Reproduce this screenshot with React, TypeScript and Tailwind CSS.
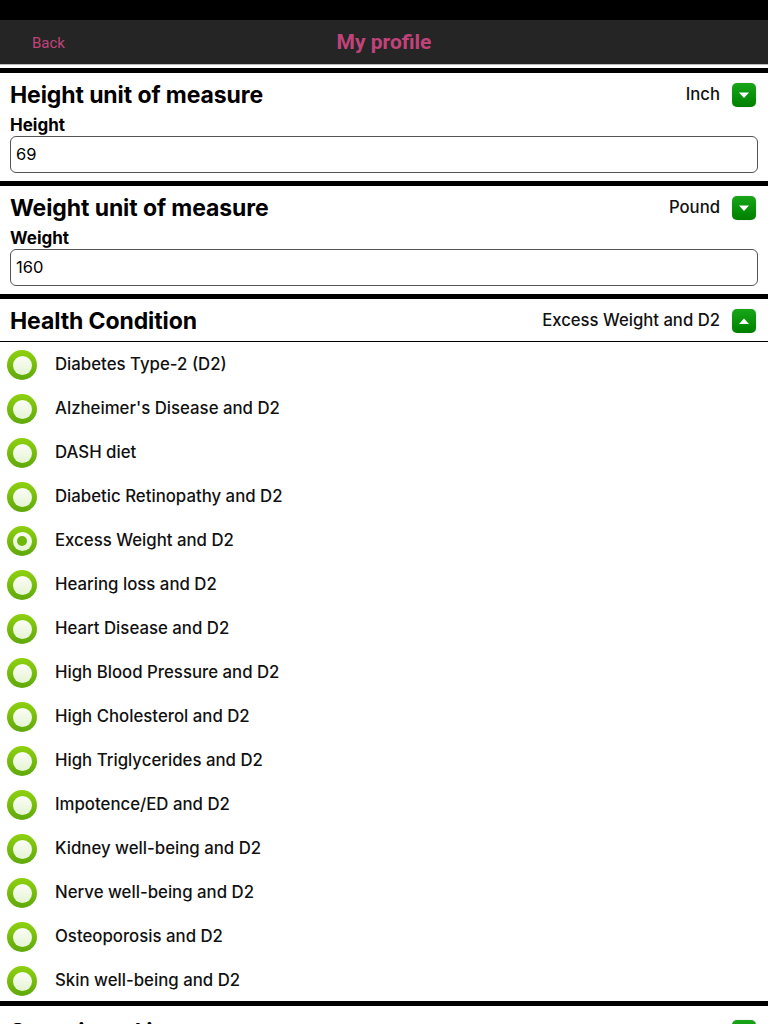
import React from "react";

const conditions = [
  "Diabetes Type-2 (D2)",
  "Alzheimer's Disease and D2",
  "DASH diet",
  "Diabetic Retinopathy and D2",
  "Excess Weight and D2",
  "Hearing loss and D2",
  "Heart Disease and D2",
  "High Blood Pressure and D2",
  "High Cholesterol and D2",
  "High Triglycerides and D2",
  "Impotence/ED and D2",
  "Kidney well-being and D2",
  "Nerve well-being and D2",
  "Osteoporosis and D2",
  "Skin well-being and D2",
];

const selected = "Excess Weight and D2";

const ToggleButton: React.FC<{ up?: boolean }> = ({ up }) => (
  <div className="w-6 h-6 rounded-[5px] bg-gradient-to-b from-[#17a617] to-[#008000] flex items-center justify-center shadow-[0_0_1px_rgba(0,0,0,0.4)]">
    <svg className="w-3 h-3" viewBox="0 0 12 12" fill="white">
      {up ? <path d="M1 9 L6 3.5 L11 9 Z" /> : <path d="M1 3.5 L11 3.5 L6 9 Z" />}
    </svg>
  </div>
);

const Radio: React.FC<{ checked: boolean }> = ({ checked }) => (
  <div className="w-[30px] h-[30px] rounded-full bg-gradient-to-b from-[#8fd10f] to-[#5ea80a] flex items-center justify-center">
    <div className="w-[19px] h-[19px] rounded-full bg-gradient-to-b from-[#fbfdf6] to-[#e6f3d2] flex items-center justify-center">
      {checked && <div className="w-[10px] h-[10px] rounded-full bg-[#6cb80c]" />}
    </div>
  </div>
);

const UnitSection: React.FC<{ title: string; unit: string; label: string; value: string }> = ({
  title,
  unit,
  label,
  value,
}) => (
  <div className="px-[10px] pt-[7px] pb-[8px]">
    <div className="flex items-center justify-between h-[30px]">
      <h2 className="text-[23px] font-bold text-black tracking-[-0.1px]">{title}</h2>
      <div className="flex items-center gap-3 pr-[2px]">
        <span className="text-[16.7px] font-medium text-[#111]">{unit}</span>
        <ToggleButton />
      </div>
    </div>
    <div className="text-[17px] font-bold text-black mt-[5px] leading-[20px]">{label}</div>
    <div className="mt-[1px] h-[37px] border border-[#555] rounded-[6px] flex items-center px-[5px] text-[16.5px] text-black">
      {value}
    </div>
  </div>
);

export default function App() {
  return (
    <div className="w-[768px] h-[1024px] overflow-hidden bg-white" style={{ fontFamily: "Inter, 'Liberation Sans', Arial, sans-serif" }}>
      <div className="h-5 bg-black" />
      <div className="h-[44px] bg-[#252525] relative flex items-center justify-center" style={{ fontFamily: "Roboto, sans-serif" }}>
        <span className="absolute left-8 top-[12px] text-[15px] text-[#c0437a]">Back</span>
        <span className="text-[21px] font-bold text-[#c0437a] mt-[2px]">My profile</span>
      </div>
      <div className="h-px bg-[#bdbdbd]" />
      <div className="h-[3px] bg-white" />
      <div className="h-[5px] bg-black" />

      <UnitSection title="Height unit of measure" unit="Inch" label="Height" value="69" />
      <div className="h-[5px] bg-black" />
      <UnitSection title="Weight unit of measure" unit="Pound" label="Weight" value="160" />
      <div className="h-[5px] bg-black" />

      <div className="px-[10px] h-[43px] pt-[2px] flex items-center justify-between border-b border-black">
        <h2 className="text-[23px] font-bold text-black tracking-[-0.1px]">Health Condition</h2>
        <div className="flex items-center gap-3 pr-[2px]">
          <span className="text-[16.7px] font-medium text-[#111]">Excess Weight and D2</span>
          <ToggleButton up />
        </div>
      </div>

      <div className="pt-px">
        {conditions.map((c) => (
          <div key={c} className="h-[44px] flex items-center pl-[7px]">
            <Radio checked={c === selected} />
            <span className="ml-[18px] text-[16.8px] font-medium text-[#111]">{c}</span>
          </div>
        ))}
      </div>

      <div className="h-[5px] bg-black mt-[-2px]" />
      <div className="px-[10px] pt-[9px] flex items-center justify-between">
        <h2 className="text-[23px] font-bold text-black tracking-[-0.1px]">Stay signed in</h2>
        <div className="flex items-center gap-3 pr-[2px]">
          <span className="text-[16.7px] font-medium text-[#111]">?</span>
          <ToggleButton />
        </div>
      </div>
    </div>
  );
}
